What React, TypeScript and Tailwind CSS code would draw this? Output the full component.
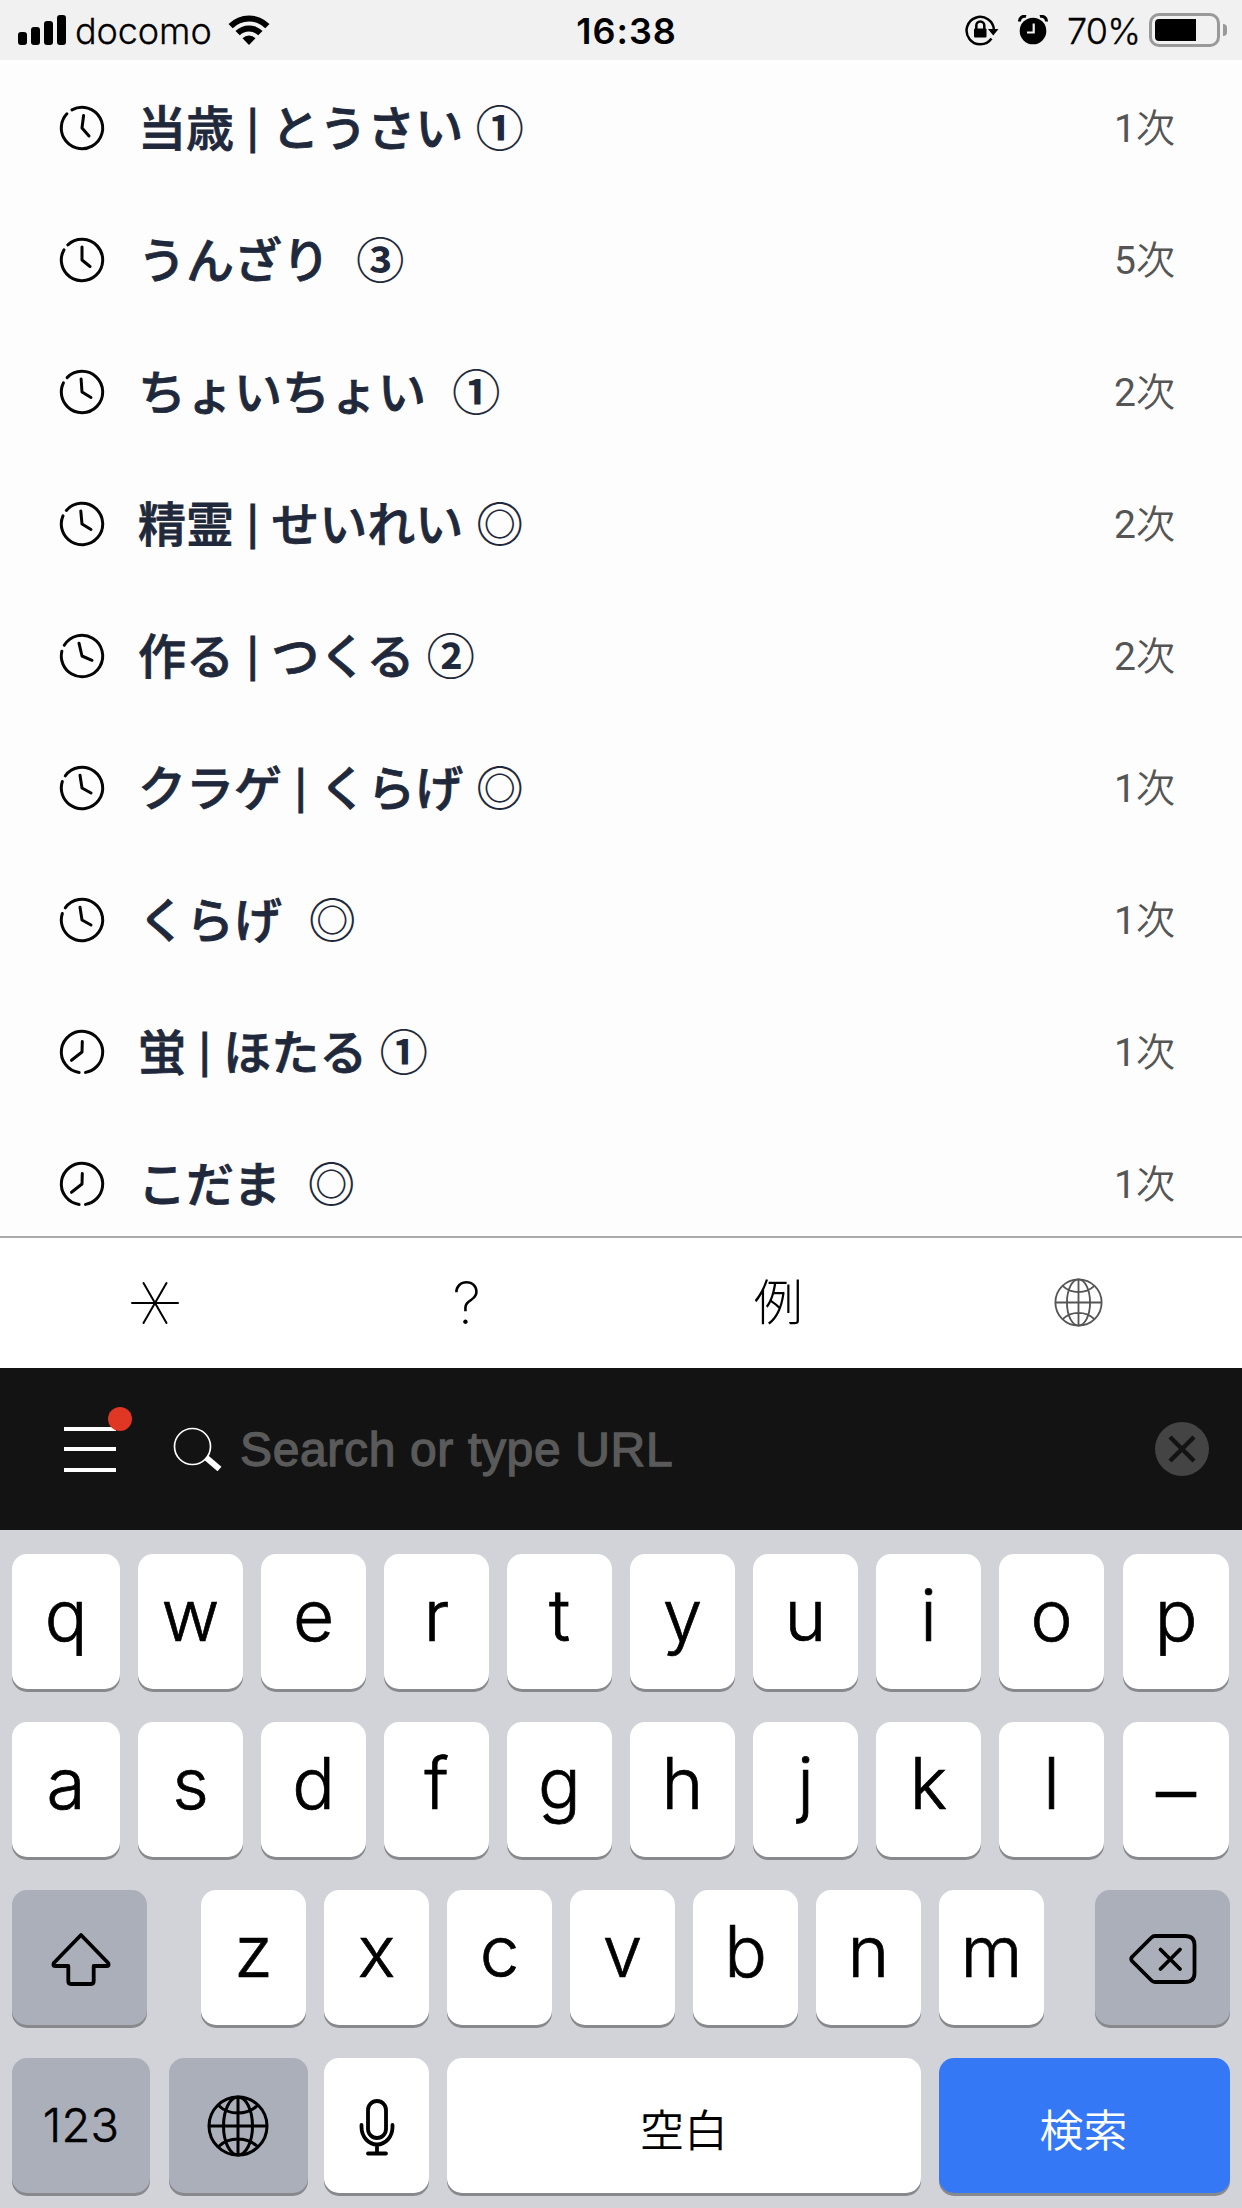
import React from "react";

type Point = [number, number];

type Entry = {
  word: string;
  accent: string;
  wide?: boolean;
  count: string;
  gap: number;
  minute: Point;
  hour: Point;
};

const entries: Entry[] = [
  { word: "当歳 | とうさい", accent: "①", count: "1", gap: 232, minute: [1.6, -12.5], hour: [7, 8] },
  { word: "うんざり", accent: "③", wide: true, count: "5", gap: 218, minute: [0, -13], hour: [8, 6.5] },
  { word: "ちょいちょい", accent: "①", wide: true, count: "2", gap: 215, minute: [-0.9, -13], hour: [9, 5.5] },
  { word: "精霊 | せいれい", accent: "◎", count: "2", gap: 212, minute: [-1.2, -13], hour: [9, 5.5] },
  { word: "作る | つくる", accent: "②", count: "2", gap: 202, minute: [-3, -12.8], hour: [10, 4.3] },
  { word: "クラゲ | くらげ", accent: "◎", count: "1", gap: 207, minute: [-2, -12.7], hour: [9, 5] },
  { word: "くらげ", accent: "◎", wide: true, count: "1", gap: 207, minute: [-2, -12.7], hour: [9, 5] },
  { word: "蛍 | ほたる", accent: "①", count: "1", gap: 89, minute: [0.3, -10.5], hour: [-10.5, 8.3] },
  { word: "こだま", accent: "◎", wide: true, count: "1", gap: 89, minute: [0.3, -10.5], hour: [-10.5, 8.3] },
];

function ClockIcon({ gap, minute, hour }: { gap: number; minute: Point; hour: Point }) {
  return (
    <svg viewBox="-24 -24 48 48" className="size-12 shrink-0" fill="none" stroke="#050505" strokeWidth="3" strokeLinecap="round" strokeLinejoin="round">
      <circle r="20.7" pathLength="360" strokeDasharray="342 18" transform={`rotate(${gap + 9})`} />
      <path d={`M${minute[0]} ${minute[1]}L0 0L${hour[0]} ${hour[1]}`} />
    </svg>
  );
}

function GlobeIcon({ className, strokeWidth }: { className: string; strokeWidth: number }) {
  return (
    <svg viewBox="-32 -32 64 64" className={className} fill="none" stroke="currentColor" strokeWidth={strokeWidth}>
      <circle r="29" />
      <ellipse rx="14.5" ry="29" />
      <path d="M-29 0H29M0-29V29M-19.5-20.5C-9-10.500 9-10.500 19.500-20.500M-19.500 20.500C-9 10.500 9 10.500 19.500 20.500" />
    </svg>
  );
}

function StatusBar() {
  return (
    <header className="flex h-[60px] shrink-0 items-center justify-between bg-[#f1f1f1] pr-[15px] pl-[18px] text-black">
      <div className="flex w-[400px] items-center">
        <div className="flex h-[30px] items-end gap-1">
          <span className="h-[13px] w-[9px] rounded-[3px] bg-black" />
          <span className="h-[18px] w-[9px] rounded-[3px] bg-black" />
          <span className="h-[24px] w-[9px] rounded-[3px] bg-black" />
          <span className="h-[30px] w-[9px] rounded-[3px] bg-black" />
        </div>
        <span className="ml-[9px] w-[144px] pt-0.5 text-[36px] leading-[44px] font-light tracking-[-0.1px] [-webkit-text-stroke:0.3px_#000]">docomo</span>
        <svg viewBox="0 0 42 30" className="ml-[9px] h-[30px] w-[42px]">
          <path d="M0.500 9A29 29 0 0 1 41.500 9L37.300 13.300A23 23 0 0 0 4.700 13.300Z" />
          <path d="M7.500 16A19.200 19.200 0 0 1 34.500 16L30.200 20.300A13.200 13.200 0 0 0 11.800 20.300Z" />
          <path d="M21 30L14.500 23.200A9.400 9.400 0 0 1 27.500 23.200Z" />
        </svg>
      </div>
      <span className="pt-0.5 pl-2 text-[36px] leading-[44px] font-semibold tracking-[1px]">16:38</span>
      <div className="flex w-[400px] items-center justify-end">
        <svg viewBox="0 0 36 32" className="h-8 w-9" fill="none" stroke="#000" strokeWidth="2.500">
          <path d="M27.500 24.500A13.700 13.700 0 1 1 30 16" />
          <path d="M24 15H34.500L29.200 21.500Z" fill="#000" stroke="none" />
          <rect x="10" y="14.500" width="12.500" height="9" rx="1" fill="#000" stroke="none" />
          <path d="M12.300 15V11.500A4 4 0 0 1 20.300 11.500V15" />
        </svg>
        <svg viewBox="0 0 30 30" className="ml-[18px] size-[30px]">
          <circle cx="15" cy="16" r="13.300" />
          <path d="M1.500 6.500A5 5 0 0 1 8 1.500M28.500 6.500A5 5 0 0 0 22 1.500" stroke="#000" strokeWidth="3" fill="none" />
          <path d="M15.700 8.500V17.500H9" stroke="#f1f1f1" strokeWidth="2.200" fill="none" />
        </svg>
        <span className="ml-[19px] w-[74px] pt-0.5 text-[36px] leading-[44px] font-light tracking-[-0.8px] [-webkit-text-stroke:0.3px_#000]">70%</span>
        <div className="ml-2 h-[34px] w-[71px] rounded-[10px] border-[3px] border-[#999] p-[3px]">
          <div className="h-full w-[41px] rounded-l-[4px] bg-black" />
        </div>
        <div className="ml-[3px] h-3 w-1 rounded-r-full bg-[#999]" />
      </div>
    </header>
  );
}

function HistoryRow({ entry }: { entry: Entry }) {
  const spacing = entry.wide ? "[word-spacing:-0.2px]" : "[word-spacing:-0.9px]";
  const accentWeight = entry.accent === "◎" ? "font-medium" : "font-bold";
  return (
    <li className="flex h-[132px] shrink-0 items-center pr-[67px] pl-[57.5px]">
      <ClockIcon gap={entry.gap} minute={entry.minute} hour={entry.hour} />
      <div className={`ml-[32.5px] flex flex-1 items-center pt-[3px] font-['Liberation_Sans','Noto_Sans_CJK_JP',sans-serif] text-[48px] leading-[60px] whitespace-pre text-[#1f293b] ${spacing}`}>
        <span className="font-medium [-webkit-text-stroke:0.8px_#1f293b]">
          {entry.word.split("|").map((part, i) => (
            <React.Fragment key={part}>
              {i > 0 && <span className="inline-block -translate-y-[3px]">|</span>}
              {part}
            </React.Fragment>
          ))}
        </span>
        <span className={accentWeight}>{entry.wide ? "  " : " "}{entry.accent}</span>
      </div>
      <span className="pt-0.5 font-[Roboto,'Noto_Sans_CJK_JP',sans-serif] text-[39px] leading-[60px] font-[350] text-[#555]"><span className="font-normal">{entry.count}</span>次</span>
    </li>
  );
}

function Toolbar() {
  return (
    <nav className="grid h-[132px] shrink-0 grid-cols-4 items-center border-t-2 border-[#aaa] bg-white text-black">
      <div className="flex justify-center">
        <svg viewBox="-25 -25 50 50" className="size-[50px]" stroke="#000" strokeWidth="2" strokeLinecap="round">
          <path d="M-23 0H23M-11.500-20L11.500 20M11.500-20L-11.500 20" />
        </svg>
      </div>
      <div className="flex justify-center pl-0.5 text-[58px] leading-[60px] font-extralight">?</div>
      <div className="flex justify-center pb-2 pl-1 font-['Noto_Sans_CJK_JP',sans-serif] text-[49px] leading-[60px] font-extralight">例</div>
      <div className="flex justify-center pr-[17px] pb-0.5 text-[#555]">
        <GlobeIcon className="size-[51px]" strokeWidth={2.3} />
      </div>
    </nav>
  );
}

function SearchBar() {
  return (
    <div className="flex h-[162px] shrink-0 items-center bg-[#131313] pr-[33px] pl-16">
      <div className="relative flex h-[45px] w-[52px] flex-col justify-between">
        <span className="h-1 bg-white" />
        <span className="h-1 bg-white" />
        <span className="h-1 bg-white" />
        <span className="absolute -top-5 left-11 size-6 rounded-full bg-[#e03624]" />
      </div>
      <svg viewBox="0 0 50 44" className="ml-[57px] h-11 w-[50px]" fill="none" stroke="#fff">
        <circle cx="19.500" cy="19.500" r="18" strokeWidth="1.700" />
        <path d="M33 30.500L46.500 42" strokeWidth="6" />
      </svg>
      <span className="ml-[17px] flex-1 pt-0.5 font-['Liberation_Sans',sans-serif] text-[48px] leading-[60px] tracking-[0.65px] text-[#5a5a5a] [-webkit-text-stroke:1.3px_#5a5a5a]">Search or type URL</span>
      <svg viewBox="-27 -27 54 54" className="size-[54px]">
        <circle r="27" fill="#444" />
        <path d="M-12-12L12 12M12-12L-12 12" stroke="#131313" strokeWidth="4.500" />
      </svg>
    </div>
  );
}

const keyBase = "flex h-[135px] shrink-0 justify-center rounded-[15px] shadow-[0_3px_0_#88898d]";

function LetterKey({ label, className = "w-[105px]" }: { label: string; className?: string }) {
  const glyph = label === "–" ? "text-[80px] leading-[136px]" : "text-[71px] leading-[122px]";
  return (
    <div className={`${keyBase} bg-white font-light text-black [-webkit-text-stroke:0.7px_#000] ${glyph} ${className}`}>{label}</div>
  );
}

function LetterRow({ letters }: { letters: string }) {
  const all = letters.split("");
  return (
    <div className="flex gap-[18px]">
      {all.map((letter, i) => (
        <LetterKey key={letter} label={letter} className={i === 0 ? "w-[108px]" : i === all.length - 1 ? "ml-px w-[106px]" : "w-[105px]"} />
      ))}
    </div>
  );
}

function Keyboard() {
  return (
    <div className="flex flex-1 flex-col gap-[33px] bg-[#d1d3d9] px-3 pt-6">
      <LetterRow letters="qwertyuiop" />
      <LetterRow letters="asdfghjkl–" />
      <div className="flex justify-between">
        <div className={`${keyBase} w-[135px] items-center bg-[#abafba]`}>
          <svg viewBox="0 0 60 54" className="mt-[3px] ml-[3px] h-[54px] w-[60px]" fill="none" stroke="#000" strokeWidth="3.800" strokeLinejoin="round">
            <path d="M30 3L2.800 31Q1.500 34 4 34H17.300V49Q17.300 52 20 52H40Q42.700 52 42.700 49V34H56Q58.500 34 57.200 31Z" />
          </svg>
        </div>
        <div className="flex gap-[18px] pl-[3px]">
          {"zxcvbnm".split("").map((letter) => (
            <LetterKey key={letter} label={letter} />
          ))}
        </div>
        <div className={`${keyBase} w-[135px] items-center bg-[#abafba]`}>
          <svg viewBox="0 0 68 50" className="mt-[3px] h-[50px] w-[68px]" fill="none" stroke="#000" strokeWidth="3.800" strokeLinecap="round" strokeLinejoin="round">
            <path d="M26 2H56Q65.500 2 65.500 11V39Q65.500 48 56 48H26Q24 48 22.500 46.500L3 27Q1.500 25 3 23L22.500 3.500Q24 2 26 2Z" />
            <path d="M31.500 15.500L51 35M51 15.500L31.500 35" />
          </svg>
        </div>
      </div>
      <div className="flex">
        <div className={`${keyBase} w-[138px] bg-[#abafba] text-[47px] leading-[134px] font-light tracking-[0.3px] text-black [-webkit-text-stroke:0.5px_#000]`}>123</div>
        <div className={`${keyBase} ml-[19px] w-[139px] items-center bg-[#abafba]`}>
          <GlobeIcon className="mr-px size-16" strokeWidth={3} />
        </div>
        <div className={`${keyBase} ml-4 w-[105px] items-center bg-white`}>
          <svg viewBox="0 0 36 58" className="mt-[5px] h-[58px] w-9" fill="none" stroke="#000" strokeWidth="3.800" strokeLinecap="round">
            <rect x="9" y="2" width="18" height="37" rx="9" />
            <path d="M2.500 26V28A15.500 17.500 0 0 0 33.500 28V26M18 46V54M9 54.500H27" />
          </svg>
        </div>
        <div className={`${keyBase} ml-[18px] w-[474px] bg-white font-['Noto_Sans_CJK_JP',sans-serif] text-[44px] leading-[140px] font-[350] text-black`}>空白</div>
        <div className={`${keyBase} ml-[18px] w-[291px] bg-[#3478f6] pr-0.5 font-['Noto_Sans_CJK_JP',sans-serif] text-[44px] leading-[140px] font-[350] text-white`}>検索</div>
      </div>
    </div>
  );
}

export default function App() {
  return (
    <div className="flex h-[2208px] w-[1242px] flex-col overflow-hidden bg-[#fdfdfd] font-['Inter',sans-serif]">
      <StatusBar />
      <ul className="flex h-[1176px] shrink-0 flex-col overflow-hidden pt-0.5">
        {entries.map((entry) => (
          <HistoryRow key={entry.word} entry={entry} />
        ))}
      </ul>
      <Toolbar />
      <SearchBar />
      <Keyboard />
    </div>
  );
}
